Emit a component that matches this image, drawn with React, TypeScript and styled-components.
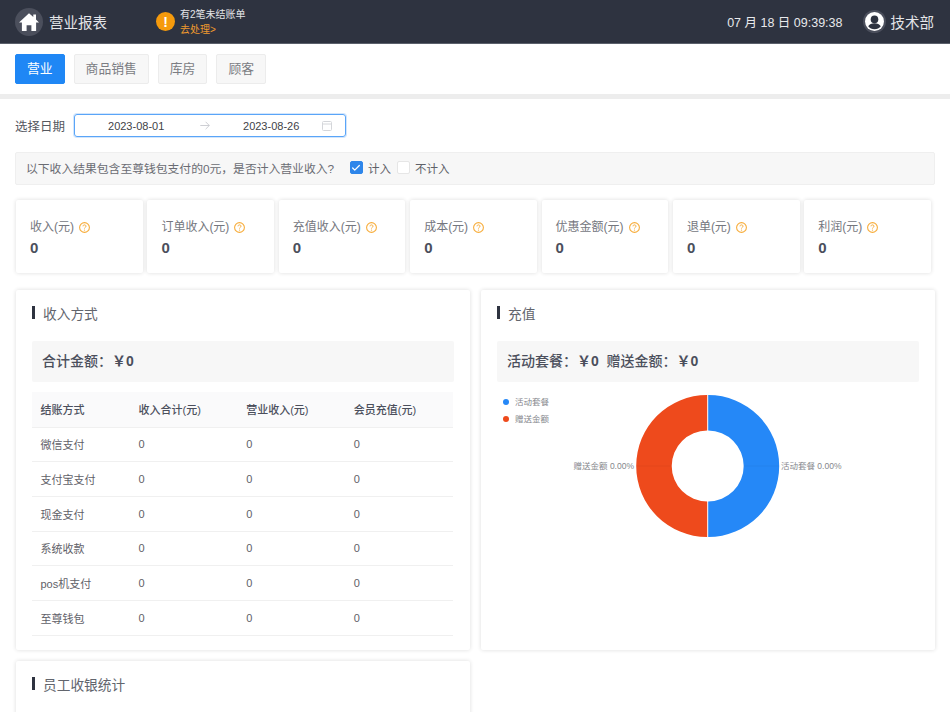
import { createGlobalStyle } from "styled-components";
import styled from "styled-components";
import { Check } from "lucide-react";

const GlobalStyle = createGlobalStyle`
  html, body {
    margin: 0;
    height: 712px;
    overflow: hidden;
    background: #fff;
  }
  body {
    font-family: "Liberation Sans", "Noto Sans CJK SC", sans-serif;
    color: #4b4f5c;
  }
  * {
    box-sizing: border-box;
  }
`;

const tabs = ["营业", "商品销售", "库房", "顾客"];
const stats = ["收入(元)", "订单收入(元)", "充值收入(元)", "成本(元)", "优惠金额(元)", "退单(元)", "利润(元)"];
const payRows = ["微信支付", "支付宝支付", "现金支付", "系统收款", "pos机支付", "至尊钱包"];

const HomeIcon = () => (
  <svg width="20" height="18" viewBox="0 0 20 18">
    <path fill="#fff" d="M10 .2 0 9.400h2.900V18h4.700v-5.700h4.800V18h4.700V9.400H20l-3-2.800V1.600h-2.700v2.500z" />
  </svg>
);

const UserIcon = () => (
  <svg width="19" height="19" viewBox="0 0 19 19">
    <circle cx="9.500" cy="9.500" r="9.500" fill="#fff" />
    <circle cx="9.500" cy="7.400" r="3.800" fill="#2e3340" />
    <path fill="#2e3340" d="M3.200 14.200c1.100-1.900 3.500-2.900 6.300-2.900s5.200 1 6.300 2.900c-1.400 1.900-3.700 3-6.300 3s-4.900-1.100-6.300-3z" />
  </svg>
);

const HelpIcon = () => (
  <svg width="11" height="11" viewBox="0 0 11 11">
    <circle cx="5.500" cy="5.500" r="4.900" fill="none" stroke="#f7ad3c" strokeWidth="1.100" />
    <path fill="none" stroke="#f7ad3c" strokeWidth="1" d="M4 4.300c0-.9.700-1.400 1.500-1.400s1.500.5 1.500 1.300c0 1.200-1.500 1.100-1.500 2.300" />
    <circle cx="5.500" cy="8.100" r=".6" fill="#f7ad3c" />
  </svg>
);

const CalendarIcon = () => (
  <svg width="10" height="10" viewBox="0 0 10 10">
    <rect x=".5" y=".5" width="9" height="9" rx="1" fill="none" stroke="#d4d6da" />
    <path stroke="#d4d6da" d="M.5 3h9" />
  </svg>
);

const ArrowIcon = () => (
  <svg width="10" height="9" viewBox="0 0 10 9">
    <path fill="none" stroke="#c8cacf" strokeWidth=".9" d="M.3 4.500h9M5.600 .8l3.700 3.700-3.700 3.700" />
  </svg>
);

const Donut = () => (
  <ChartSvg viewBox="0 0 421 236">
    <circle cx="9" cy="14" r="3" fill="#2588f7" />
    <ChartLabel x="18" y="17">活动套餐</ChartLabel>
    <circle cx="9" cy="31" r="3" fill="#ee4a1c" />
    <ChartLabel x="18" y="34">赠送金额</ChartLabel>
    <path fill="#2588f7" d="M211.200 7a71 71 0 0 1 0 142v-35.500a35.500 35.500 0 0 0 0-71z" />
    <path fill="#ee4a1c" d="M210.200 7a71 71 0 0 0 0 142v-35.500a35.500 35.500 0 0 1 0-71z" />
    <path stroke="#000" strokeOpacity=".06" strokeWidth=".7" d="M140 78h35M246 78h36" />
    <ChartLabel x="284" y="81">活动套餐 0.00%</ChartLabel>
    <ChartLabel x="137" y="81" textAnchor="end">赠送金额 0.00%</ChartLabel>
  </ChartSvg>
);

export default function App() {
  return (
    <>
      <GlobalStyle />
      <Header>
        <Brand>
          <HomeBadge><HomeIcon /></HomeBadge>
          <BrandTitle>营业报表</BrandTitle>
        </Brand>
        <Notice>
          <WarnDot>!</WarnDot>
          <NoticeText>
            <span>有2笔未结账单</span>
            <NoticeLink>去处理&gt;</NoticeLink>
          </NoticeText>
        </Notice>
        <Clock>07 月 18 日 09:39:38</Clock>
        <UserBadge><UserIcon /></UserBadge>
        <Dept>技术部</Dept>
      </Header>

      <TabBar>
        {tabs.map((t, i) => (
          <Tab key={t} $active={i === 0}>{t}</Tab>
        ))}
      </TabBar>

      <Main>
        <DateRow>
          <DateLabel>选择日期</DateLabel>
          <RangePicker>
            <DateValue>2023-08-01</DateValue>
            <RangeArrow><ArrowIcon /></RangeArrow>
            <DateValue>2023-08-26</DateValue>
            <RangeSuffix><CalendarIcon /></RangeSuffix>
          </RangePicker>
        </DateRow>

        <AlertBar>
          <span>以下收入结果包含至尊钱包支付的0元，是否计入营业收入?</span>
          <CheckGroup>
            <CheckBox $checked><Check size={10} color="#fff" strokeWidth={3} /></CheckBox>
            <span>计入</span>
            <CheckBox />
            <span>不计入</span>
          </CheckGroup>
        </AlertBar>

        <StatRow>
          {stats.map((s) => (
            <StatCard key={s}>
              <StatLabel>{s}<HelpIcon /></StatLabel>
              <StatValue>0</StatValue>
            </StatCard>
          ))}
        </StatRow>

        <PanelGrid>
          <Panel>
            <PanelTitle>收入方式</PanelTitle>
            <SummaryBox>合计金额：<Amount>￥0</Amount></SummaryBox>
            <PayTable>
              <thead>
                <tr>
                  <th>结账方式</th>
                  <th>收入合计(元)</th>
                  <th>营业收入(元)</th>
                  <th>会员充值(元)</th>
                </tr>
              </thead>
              <tbody>
                {payRows.map((r) => (
                  <tr key={r}>
                    <td>{r}</td>
                    <td>0</td>
                    <td>0</td>
                    <td>0</td>
                  </tr>
                ))}
              </tbody>
            </PayTable>
          </Panel>
          <Panel>
            <PanelTitle>充值</PanelTitle>
            <SummaryBox>活动套餐：<Amount>￥0</Amount>&nbsp;&nbsp;赠送金额：<Amount>￥0</Amount></SummaryBox>
            <Donut />
          </Panel>
          <Panel>
            <PanelTitle>员工收银统计</PanelTitle>
          </Panel>
        </PanelGrid>
      </Main>
    </>
  );
}

const Header = styled.header`
  height: 44px;
  background: #2e3340;
  border-bottom: 1px solid #5b606b;
  display: flex;
  align-items: center;
  padding: 0 16px 0 15px;
  color: #fff;
`;

const Brand = styled.div`
  display: flex;
  align-items: center;
  gap: 6px;
  width: 141px;
`;

const HomeBadge = styled.div`
  width: 28px;
  height: 28px;
  border-radius: 50%;
  background: #4b4f5c;
  display: flex;
  align-items: center;
  justify-content: center;
`;

const BrandTitle = styled.div`
  font-size: 14.500px;
  color: #e4e5e8;
`;

const Notice = styled.div`
  display: flex;
  align-items: center;
  gap: 5px;
  flex: 1;
`;

const WarnDot = styled.div`
  width: 19px;
  height: 19px;
  border-radius: 50%;
  background: #f59a0c;
  color: #fff;
  font-size: 14px;
  font-weight: bold;
  display: flex;
  align-items: center;
  justify-content: center;
`;

const NoticeText = styled.div`
  display: flex;
  flex-direction: column;
  margin-top: 2px;
  gap: 1px;
  font-size: 10px;
  line-height: 14px;
  color: #e4e5e8;
`;

const NoticeLink = styled.span`
  color: #ee9a2e;
`;

const Clock = styled.div`
  font-size: 12.500px;
  color: #e8e9eb;
  margin-right: 20px;
`;

const UserBadge = styled.div`
  width: 23px;
  height: 23px;
  border-radius: 50%;
  background: #4b4f5c;
  display: flex;
  align-items: center;
  justify-content: center;
  margin-right: 5px;
`;

const Dept = styled.div`
  font-size: 14.500px;
  color: #e4e5e8;
`;

const TabBar = styled.nav`
  height: 55px;
  display: flex;
  align-items: flex-start;
  gap: 9px;
  padding: 10px 15px 0;
  border-bottom: 5px solid #ededed;
`;

const Tab = styled.div<{ $active?: boolean }>`
  height: 30px;
  padding: 0 11px;
  border-radius: 2px;
  font-size: 12.800px;
  line-height: 28px;
  background: ${(p) => (p.$active ? "#1f87f5" : "#f7f7f7")};
  border: 1px solid ${(p) => (p.$active ? "#1f87f5" : "#ececec")};
  color: ${(p) => (p.$active ? "#fff" : "#7b7d83")};
`;

const Main = styled.main`
  padding: 15px 15px 0;
`;

const DateRow = styled.div`
  display: flex;
  align-items: center;
  gap: 9px;
  height: 23px;
`;

const DateLabel = styled.div`
  font-size: 12.500px;
  color: #55585f;
`;

const RangePicker = styled.div`
  width: 272px;
  height: 23px;
  border: 1px solid #5aa5f8;
  border-radius: 3px;
  box-shadow: 0 0 0 1px #d3e6fc;
  display: flex;
  align-items: center;
  padding: 0 0 0 33px;
`;

const DateValue = styled.span`
  width: 56px;
  font-size: 11px;
  white-space: nowrap;
  color: #3f4247;
`;

const RangeArrow = styled.span`
  display: flex;
  margin: 0 33px 0 36px;
`;

const RangeSuffix = styled.span`
  display: flex;
  margin-left: 23px;
`;

const AlertBar = styled.div`
  margin-top: 15px;
  height: 33px;
  background: #f7f7f7;
  border: 1px solid #efefef;
  border-radius: 2px;
  display: flex;
  align-items: center;
  gap: 15.500px;
  padding: 0 10px 2px;
  font-size: 11.800px;
  color: #6a6c73;
`;

const CheckGroup = styled.div`
  display: flex;
  align-items: center;
  font-size: 11.500px;
  color: #5f6168;
  gap: 5.500px;
`;

const CheckBox = styled.div<{ $checked?: boolean }>`
  width: 13px;
  height: 13px;
  border-radius: 2px;
  background: ${(p) => (p.$checked ? "#2e86ea" : "#fff")};
  border: 1px solid ${(p) => (p.$checked ? "#2e86ea" : "#e6e6e6")};
  display: flex;
  align-items: center;
  justify-content: center;
`;

const StatRow = styled.div`
  margin-top: 15px;
  padding-left: 1px;
  display: flex;
  gap: 4.700px;
`;

const Card = styled.section`
  background: #fff;
  border-radius: 2px;
  box-shadow: 0 0 4px rgba(0, 0, 0, 0.14);
`;

const StatCard = styled(Card)`
  width: 126.700px;
  height: 73px;
  padding: 20px 14px 0;
`;

const StatLabel = styled.div`
  display: flex;
  align-items: center;
  gap: 5px;
  font-size: 12px;
  line-height: 14px;
  color: #75777e;
`;

const StatValue = styled.div`
  margin-top: 5px;
  font-size: 15px;
  line-height: 18px;
  font-weight: bold;
  color: #4b4f5c;
`;

const PanelGrid = styled.div`
  margin-top: 17px;
  padding-left: 1px;
  display: grid;
  grid-template-columns: 454px 454px;
  column-gap: 11px;
  row-gap: 11px;
`;

const Panel = styled(Card)`
  height: 360px;
  padding: 16px 16px 0;
`;

const PanelTitle = styled.h3`
  margin: -2px 0 0;
  height: 17px;
  display: flex;
  align-items: center;
  gap: 8px;
  font-size: 13.700px;
  font-weight: normal;
  color: #62656d;

  &::before {
    content: "";
    width: 3px;
    height: 13px;
    background: #2e3340;
  }
`;

const SummaryBox = styled.div`
  margin-top: 20px;
  height: 41px;
  background: #f7f7f7;
  border-radius: 2px;
  padding: 0 10px;
  font-size: 14px;
  line-height: 41px;
  font-weight: 500;
  color: #4b4f5c;
`;

const Amount = styled.span`
  font-weight: bold;
`;

const PayTable = styled.table`
  margin-top: 10px;
  width: 421px;
  table-layout: fixed;
  border-collapse: collapse;
  font-size: 11px;
  color: #5f6168;

  th, td {
    text-align: left;
    padding: 0 8.500px;
    border-bottom: 1px solid #f0f0f0;
  }

  th {
    height: 35px;
    background: #fafafb;
    font-weight: 500;
    color: #4b4f5c;
  }

  td {
    height: 34.700px;
  }

  th:first-child {
    width: 98px;
  }
`;

const ChartSvg = styled.svg`
  display: block;
  width: 421px;
  height: 236px;
  margin-top: 6px;
`;

const ChartLabel = styled.text`
  font-size: 8.500px;
  fill: #85878c;
`;
